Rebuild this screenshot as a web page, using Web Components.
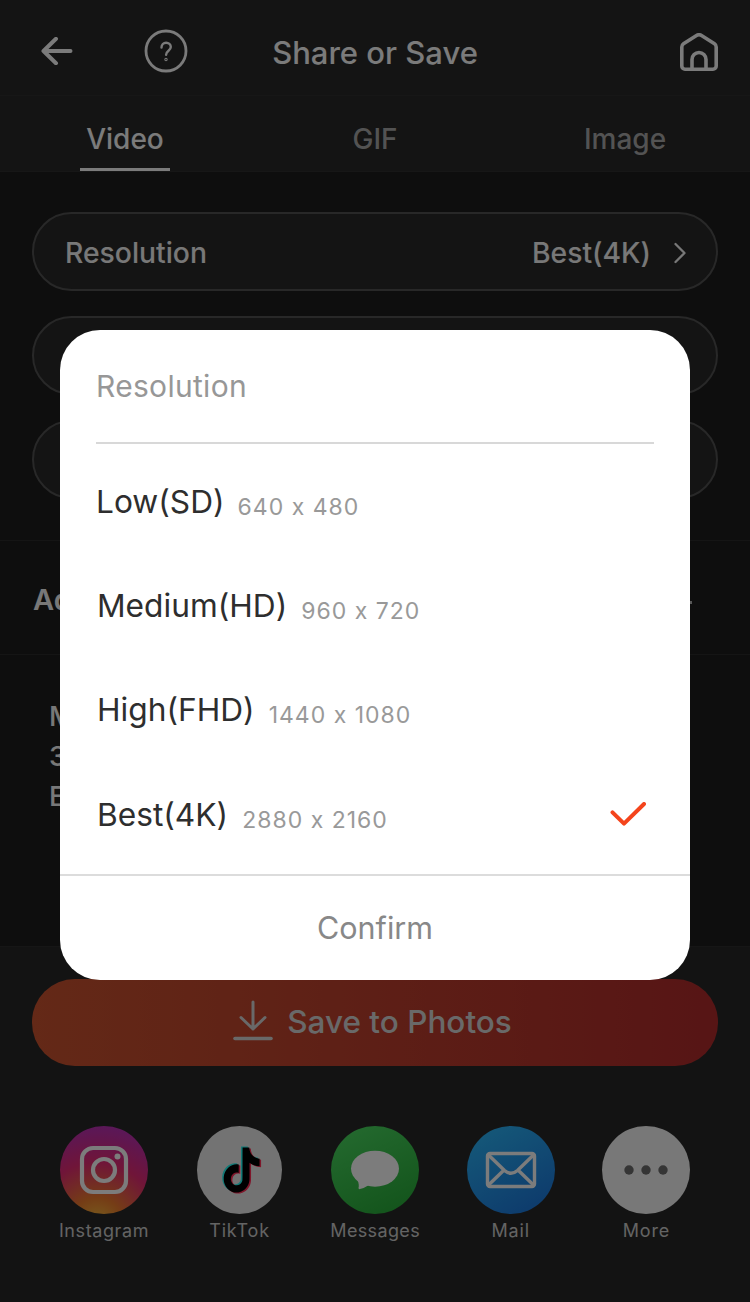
<!DOCTYPE html>
<html>
<head>
<meta charset="utf-8">
<title>Share or Save</title>
<style>
html, body{
    margin: 0;
    background: #1c1c1c;
    font-family: Inter, "Liberation Sans", sans-serif;
}
</style>
</head>
<body>
<share-page>
    <share-header slot="top" title="Share or Save"></share-header>
    <share-tabs slot="top"></share-tabs>

    <setting-row label="Resolution" value="Best(4K)"></setting-row>
    <setting-row style="margin-top:25px"></setting-row>
    <setting-row style="margin-top:25px"></setting-row>

    <advanced-panel slot="lower"></advanced-panel>

    <share-footer slot="bottom">
        <share-target label="Instagram" kind="instagram"></share-target>
        <share-target label="TikTok" kind="tiktok" style="--ls:.85px"></share-target>
        <share-target label="Messages" kind="messages" style="--ls:.35px"></share-target>
        <share-target label="Mail" kind="mail" style="--ls:.9px"></share-target>
        <share-target label="More" kind="more" style="--ls:.8px"></share-target>
    </share-footer>

    <resolution-dialog slot="overlay" heading="Resolution" action="Confirm">
        <res-option name="Low(SD)" size="640 x 480" style="--x:36px;--gap:13px"></res-option>
        <res-option name="Medium(HD)" size="960 x 720"></res-option>
        <res-option name="High(FHD)" size="1440 x 1080"></res-option>
        <res-option name="Best(4K)" size="2880 x 2160" selected></res-option>
    </resolution-dialog>
</share-page>

<script>
class Share_Page extends HTMLElement{
    constructor(){
        super();
        const shadowRoot = this.attachShadow({mode: 'open'});
        shadowRoot.innerHTML = `
<style>
:host{
    display: flex;
    flex-direction: column;
    position: relative;
    width: 750px;
    height: 1302px;
    overflow: hidden;
    background: #1c1c1c;
    color: #f6f6f6;
}
.rows{
    display: flex;
    flex-direction: column;
    padding: 40px 32px 41px;
}
.grow{
    flex: 1;
}
.scrim{
    position: absolute;
    inset: 0;
    background: rgba(0,0,0,.5);
    display: flex;
    justify-content: center;
    align-items: flex-start;
    padding-top: 330px;
    box-sizing: border-box;
}
</style>
<slot name=top></slot>
<div class=rows><slot></slot></div>
<div class=grow><slot name=lower></slot></div>
<slot name=bottom></slot>
<div class=scrim><slot name=overlay></slot></div>
`;
    }
}

class Share_Header extends HTMLElement{
    connectedCallback(){
        const shadowRoot = this.attachShadow({mode: 'open'});
        shadowRoot.innerHTML = `
<style>
:host{
    display: block;
    position: relative;
    height: 95px;
    background: #282828;
    border-bottom: 1px solid #2e2e2e;
}
.bar{
    display: flex;
    align-items: center;
    height: 100%;
    padding: 0 32px 0 41px;
}
svg{
    fill: none;
    stroke: currentColor;
    stroke-width: 3.6;
    stroke-linecap: round;
    stroke-linejoin: round;
    display: block;
    flex: none;
}
.back{ margin-top: 7px; stroke-width: 4; }
.help{ margin: 7px 0 0 71px; stroke-width: 2.8; }
.home{ margin: 9px 0 0 auto; }
h1{
    position: absolute;
    left: 0;
    right: 0;
    top: 35px;
    margin: 0;
    text-align: center;
    font-size: 31px;
    line-height: 36px;
    font-weight: 500;
}
</style>
<div class=bar>
    <svg class=back width=32 height=28 viewBox="0 0 32 28"><path d="M2.500 14H29.500M15 1.800L2.500 14L15 26.200"/></svg>
    <svg class=help width=44 height=44 viewBox="0 0 44 44">
        <circle cx=22 cy=22 r=20 />
        <path d="M17.500 18.500c0-3 2-4.800 4.600-4.800s4.700 1.900 4.700 4.300c0 3.800-4.700 3.700-4.700 7.800" stroke-width=2.400 />
        <circle cx=22 cy=30.500 r=.5 stroke-width=2.400 />
    </svg>
    <svg class=home width=38 height=38 viewBox="0 0 38 38">
        <path d="M1.800 14Q1.800 11.800 3.500 10.700L16.500 2.500Q19 1 21.500 2.500L34.500 10.700Q36.200 11.800 36.200 14V33A3.200 3.200 0 0 1 33 36.200H5A3.200 3.200 0 0 1 1.800 33Z"/>
        <path d="M12 36V26.500a7 7 0 0 1 14 0V36"/>
    </svg>
</div>
<h1>${this.getAttribute('title')}</h1>
`;
    }
}

class Share_Tabs extends HTMLElement{
    constructor(){
        super();
        const shadowRoot = this.attachShadow({mode: 'open'});
        shadowRoot.innerHTML = `
<style>
:host{
    display: grid;
    grid-template-columns: 250px 250px 250px;
    height: 75px;
    background: #282828;
    border-bottom: 1px solid #2e2e2e;
    font-size: 28px;
    font-weight: 500;
}
div{
    display: flex;
    justify-content: center;
    padding-top: 26px;
    line-height: 34px;
    color: #a6a6a6;
    position: relative;
    box-sizing: border-box;
}
.on{
    color: #f6f6f6;
}
.on::after{
    content: '';
    position: absolute;
    left: 80px;
    width: 90px;
    height: 3px;
    bottom: 0;
    background: #f6f6f6;
}
</style>
<div class=on>Video</div><div>GIF</div><div>Image</div>
`;
    }
}

class Setting_Row extends HTMLElement{
    connectedCallback(){
        const label = this.getAttribute('label');
        const shadowRoot = this.attachShadow({mode: 'open'});
        shadowRoot.innerHTML = `
<style>
:host{
    display: flex;
    align-items: center;
    height: 79px;
    box-sizing: border-box;
    border: 2px solid #505050;
    border-radius: 40px;
    padding: 2px 29px 0 31px;
    background: #282828;
    font-size: 28.300px;
    font-weight: 500;
    color: #f0f0f0;
}
.value{
    margin-left: auto;
}
svg{
    margin-left: 22px;
    fill: none;
    stroke: currentColor;
    stroke-width: 2.300;
    stroke-linecap: round;
    stroke-linejoin: round;
}
</style>
${label ? `<span>${label}</span><span class=value>${this.getAttribute('value')}</span>
<svg width=14 height=22 viewBox="0 0 14 22"><path d="M2.500 2L11.500 11L2.500 20"/></svg>` : ''}
`;
    }
}

class Advanced_Panel extends HTMLElement{
    constructor(){
        super();
        const shadowRoot = this.attachShadow({mode: 'open'});
        shadowRoot.innerHTML = `
<style>
:host{
    display: block;
    font-size: 27.500px;
    color: #f0f0f0;
}
.head{
    display: flex;
    align-items: center;
    justify-content: space-between;
    height: 113px;
    box-sizing: content-box;
    padding: 0 58px 0 33px;
    border-top: 1px solid #2a2a2a;
    border-bottom: 1px solid #2a2a2a;
    font-weight: 600;
    font-size: 29px;
}
.head span:first-child{
    padding-top: 4px;
}
.mark{
    width: 12px;
    height: 3px;
    margin-top: 10px;
    background: #b0b0b0;
}
.info{
    padding: 41px 49px;
    line-height: 40px;
    font-weight: 500;
}
</style>
<div class=head><span>Ad</span><span class=mark></span></div>
<div class=info>M<br>3<br>E</div>
`;
    }
}

class Share_Footer extends HTMLElement{
    constructor(){
        super();
        const shadowRoot = this.attachShadow({mode: 'open'});
        shadowRoot.innerHTML = `
<style>
:host{
    display: block;
    height: 356px;
    box-sizing: border-box;
    background: #272727;
    border-top: 1px solid #2c2c2c;
    padding: 32px 32px 0;
}
.save{
    display: flex;
    align-items: center;
    justify-content: center;
    gap: 14px;
    height: 87px;
    padding: 0 5px 0 0;
    box-sizing: border-box;
    border-radius: 43px;
    background: linear-gradient(90deg, #c8522e, #ae2a2a);
    color: #d2d2d2;
    font-size: 31.500px;
    font-weight: 500;
}
.save span{
    margin-top: -2px;
}
svg{
    fill: none;
    stroke: currentColor;
    stroke-width: 3;
    stroke-linecap: round;
    stroke-linejoin: round;
    display: block;
    margin-top: -3px;
}
.targets{
    display: grid;
    grid-template-columns: repeat(5, 135.600px);
    margin: 60px 0 0 4.200px;
}
</style>
<div class=save>
    <svg width=40 height=42 viewBox="0 0 40 42">
        <path d="M20 2V29M8 17.500L20 29L32 17.500"/>
        <path d="M2 38.500H38" stroke-width=3.600 />
    </svg>
    <span>Save to Photos</span>
</div>
<div class=targets><slot></slot></div>
`;
    }
}

const tiktok_note = 'M12.525.02c1.31-.02 2.61-.01 3.91-.02.08 1.530.630 3.090 1.750 4.170 1.120 1.110 2.700 1.620 4.240 1.790v4.030c-1.440-.05-2.890-.350-4.200-.970-.570-.260-1.100-.590-1.620-.930-.01 2.920.01 5.840-.02 8.750-.08 1.400-.540 2.790-1.350 3.940-1.310 1.920-3.580 3.170-5.910 3.210-1.430.08-2.860-.310-4.080-1.030-2.020-1.190-3.440-3.370-3.650-5.710-.02-.5-.03-1-.01-1.490.18-1.900 1.120-3.720 2.580-4.960 1.660-1.440 3.980-2.130 6.150-1.720.02 1.480-.04 2.960-.04 4.440-.99-.320-2.150-.230-3.020.370-.630.410-1.110 1.040-1.360 1.750-.210.510-.150 1.070-.140 1.610.240 1.640 1.820 3.020 3.500 2.870 1.120-.01 2.190-.660 2.770-1.610.190-.330.400-.670.410-1.060.1-1.790.060-3.570.070-5.360.01-4.030-.01-8.050.020-12.070z';

const target_icons = {
    instagram: `<svg width=88 height=88 viewBox="0 0 88 88" fill=none stroke="#f8f8f8" stroke-width=4.200>
        <rect x=22 y=22 width=44 height=44 rx=11 />
        <circle cx=44 cy=44 r=11 />
        <circle cx=57.500 cy=30.500 r=3 fill="#f8f8f8" stroke=none />
    </svg>`,
    tiktok: `<svg width=88 height=88 viewBox="0 0 88 88" style="margin-left:-1.500px">
        <path transform="translate(23.500 20.500) scale(1.720 1.880)" fill="#25f4ee" d="${tiktok_note}"/>
        <path transform="translate(26.500 22.500) scale(1.720 1.880)" fill="#fe2c55" d="${tiktok_note}"/>
        <path transform="translate(25 21.500) scale(1.720 1.880)" fill="#000" d="${tiktok_note}"/>
    </svg>`,
    messages: `<svg width=88 height=88 viewBox="0 0 88 88" fill="#f8f8f8">
        <ellipse cx=44 cy=42.700 rx=24 ry=18 />
        <path d="M26.500 54C28 57.500 28 60.500 27.500 62Q27.500 63.500 29 63Q33.500 62 38 59Z"/>
    </svg>`,
    mail: `<svg width=88 height=88 viewBox="0 0 88 88" fill=none stroke="#f8f8f8" stroke-width=3.400 stroke-linejoin=round stroke-linecap=round>
        <rect x=20.500 y=27.500 width=47 height=33 rx=2.500 />
        <path d="M21.500 29L37.500 44.500Q44 50 50.500 44.500L66.500 29M21.500 59L36 45M66.500 59L52 45"/>
    </svg>`,
    more: `<svg width=88 height=88 viewBox="0 0 88 88" fill="#6a6a6a">
        <circle cx=27 cy=44 r=4.700 /><circle cx=44 cy=44 r=4.700 /><circle cx=61 cy=44 r=4.700 />
    </svg>`
};

const target_fills = {
    instagram: 'radial-gradient(circle at 42% 112%, #f2c23e 0, #ea7a2c 24%, #e02a72 56%, #c42c98 76%, #a834c8 100%)',
    tiktok: '#e6e6e6',
    messages: 'linear-gradient(155deg, #4ad660, #24a534)',
    mail: 'linear-gradient(150deg, #2bb6f4, #1a6fd6)',
    more: '#f0f0f0'
};

class Share_Target extends HTMLElement{
    connectedCallback(){
        const kind = this.getAttribute('kind');
        const shadowRoot = this.attachShadow({mode: 'open'});
        shadowRoot.innerHTML = `
<style>
:host{
    display: flex;
    flex-direction: column;
    align-items: center;
    font-size: 18px;
    letter-spacing: var(--ls, .6px);
    color: #c8c8c8;
}
.disc{
    width: ${kind == 'tiktok' ? 85 : 88}px;
    height: 88px;
    border-radius: 50%;
    background: ${target_fills[kind]};
}
svg{ display: block; }
span{
    margin-top: 6px;
    line-height: 22px;
    white-space: nowrap;
}
</style>
<div class=disc>${target_icons[kind]}</div>
<span>${this.getAttribute('label')}</span>
`;
    }
}

class Resolution_Dialog extends HTMLElement{
    connectedCallback(){
        const shadowRoot = this.attachShadow({mode: 'open'});
        shadowRoot.innerHTML = `
<style>
:host{
    display: flex;
    flex-direction: column;
    width: 630px;
    height: 650px;
    background: #fff;
    border-radius: 40px;
    overflow: hidden;
}
h2{
    margin: 0 36px;
    height: 114px;
    box-sizing: border-box;
    padding-top: 38px;
    border-bottom: 2px solid #d8d8d8;
    font-size: 30px;
    line-height: 36px;
    font-weight: 400;
    color: #979797;
    letter-spacing: .3px;
}
.list{
    flex: 1;
    padding-top: 5px;
}
button{
    all: unset;
    display: block;
    height: 106px;
    box-sizing: border-box;
    border-top: 2px solid #dcdcdc;
    text-align: center;
    font-size: 30.500px;
    line-height: 102px;
    color: #888;
}
</style>
<h2>${this.getAttribute('heading')}</h2>
<div class=list><slot></slot></div>
<button>${this.getAttribute('action')}</button>
`;
    }
}

class Res_Option extends HTMLElement{
    connectedCallback(){
        const shadowRoot = this.attachShadow({mode: 'open'});
        shadowRoot.innerHTML = `
<style>
:host{
    display: flex;
    align-items: center;
    height: 104.300px;
    padding: 0 44px 0 var(--x, 37px);
}
b{
    font-size: 31.700px;
    font-weight: 400;
    color: #2e2e2e;
}
span{
    margin-left: var(--gap, 14px);
    font-size: 23px;
    letter-spacing: 1px;
    color: #999;
    padding-top: 11px;
}
svg{
    margin: 4px 0 0 auto;
    fill: none;
    stroke: #f4441c;
    stroke-width: 4;
    stroke-linecap: round;
    stroke-linejoin: round;
}
</style>
<b>${this.getAttribute('name')}</b>
<span>${this.getAttribute('size')}</span>
${this.hasAttribute('selected') ? '<svg width=36 height=28 viewBox="0 0 36 28"><path d="M2.500 10.300L14 21.700L34 2"/></svg>' : ''}
`;
    }
}

customElements.define('share-page', Share_Page);
customElements.define('share-header', Share_Header);
customElements.define('share-tabs', Share_Tabs);
customElements.define('setting-row', Setting_Row);
customElements.define('advanced-panel', Advanced_Panel);
customElements.define('share-footer', Share_Footer);
customElements.define('share-target', Share_Target);
customElements.define('resolution-dialog', Resolution_Dialog);
customElements.define('res-option', Res_Option);
</script>
</body>
</html>
